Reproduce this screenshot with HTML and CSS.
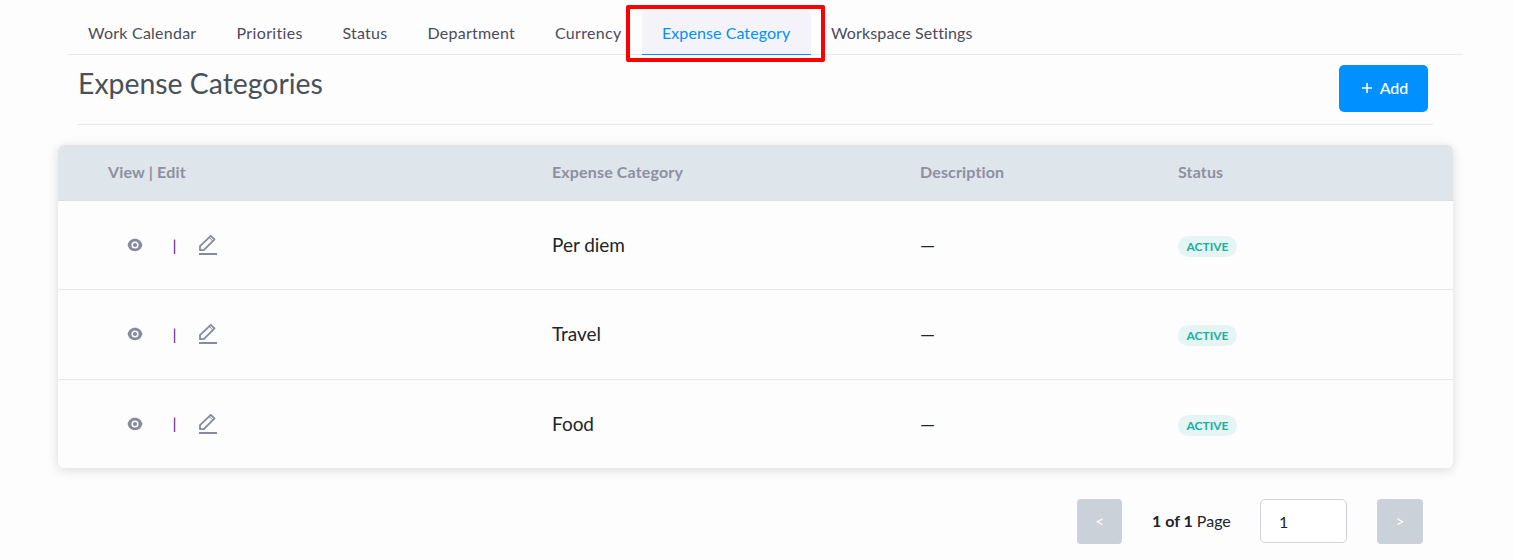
FILE: index.html
```html
<!DOCTYPE html>
<html lang="en">
<head>
<meta charset="utf-8">
<title>Expense Categories</title>
<link rel="stylesheet" href="styles.css">
</head>
<body>
<svg class="sprite" aria-hidden="true">
  <symbol id="eye" viewBox="0 0 16 14"><path fill-rule="evenodd" d="M8 .8C4.200.8 1.500 3.200.6 7c.9 3.800 3.600 6.200 7.400 6.200s6.500-2.400 7.400-6.200C14.500 3.200 11.800.8 8 .8Zm0 2.600a3.600 3.600 0 1 1 0 7.200 3.600 3.600 0 0 1 0-7.200Zm0 1.500a2.100 2.100 0 1 0 0 4.200 2.100 2.100 0 0 0 0-4.200Z"/></symbol>
  <symbol id="edit" viewBox="0 0 18 20"><path fill="none" stroke="currentColor" stroke-width="1.800" stroke-linejoin="round" d="M1 15.200v-4L11.800.9l3.700 3.500L4.800 15.200Z"/><path fill="none" stroke="currentColor" stroke-width="1" d="M10.600 2.900l2.900 2.900"/><path d="M0 18h18v2H0z"/></symbol>
</svg>
<nav class="tabs">
  <a class="tab calendar">Work Calendar</a>
  <a class="tab priorities">Priorities</a>
  <a class="tab status">Status</a>
  <a class="tab department">Department</a>
  <a class="tab currency">Currency</a>
  <a class="tab active">Expense Category<span class="highlight"></span></a>
  <a class="tab workspace">Workspace Settings</a>
</nav>
<header class="heading">
  <h1>Expense Categories</h1>
  <button class="add"><svg class="plus" viewBox="0 0 10 10"><path d="M5 0v10M0 5h10"/></svg>Add</button>
</header>
<main class="table">
  <div class="row head"><span>View | Edit</span><span>Expense Category</span><span>Description</span><span>Status</span></div>
  <div class="row"><span class="actions"><svg class="eye"><use href="#eye"/></svg><i class="sep">|</i><svg class="edit"><use href="#edit"/></svg></span><span class="name">Per diem</span><span class="dash">—</span><span><b class="badge">ACTIVE</b></span></div>
  <div class="row"><span class="actions"><svg class="eye"><use href="#eye"/></svg><i class="sep">|</i><svg class="edit"><use href="#edit"/></svg></span><span class="name">Travel</span><span class="dash">—</span><span><b class="badge">ACTIVE</b></span></div>
  <div class="row"><span class="actions"><svg class="eye"><use href="#eye"/></svg><i class="sep">|</i><svg class="edit"><use href="#edit"/></svg></span><span class="name">Food</span><span class="dash">—</span><span><b class="badge">ACTIVE</b></span></div>
</main>
<footer class="pager">
  <button class="step">&lt;</button>
  <span class="count"><b>1 of 1</b> Page</span>
  <input class="page" value="1">
  <button class="step next">&gt;</button>
</footer>
</body>
</html>
```
FILE: styles.css
```css
* { box-sizing: border-box; }
body { margin: 0; padding-top: 11px; height: 560px; overflow: hidden; background: #fdfdfd; color: #212529; font-family: Lato, "Liberation Sans", sans-serif; font-size: 16px; }
.sprite { display: none; }
.tabs { display: flex; width: 1395px; height: 44px; margin-left: 68px; border-bottom: 1px solid #e8e8eb; }
.tab { position: relative; flex: none; height: 44px; padding: 0 20px; line-height: 43px; color: #4b4b5a; white-space: nowrap; letter-spacing: .24px; }
.calendar { width: 148.500px; }
.priorities { width: 106px; letter-spacing: .36px; }
.status { width: 85px; }
.department { width: 127.500px; }
.currency { width: 107px; letter-spacing: .3px; }
.workspace { letter-spacing: .14px; }
.active { width: 169px; letter-spacing: .08px; color: #0090ff; background: #f4f3f9; border-bottom: 1px solid #0090ff; border-radius: 5px 5px 0 0; }
.highlight { position: absolute; left: -16px; top: -6px; width: 199px; height: 57px; border: 4px solid #f00; border-radius: 2px; }
.heading { display: flex; justify-content: space-between; width: 1355px; height: 70px; margin-left: 78px; padding: 10px 5px 0 0; border-bottom: 1px solid #e8e8e8; }
h1 { margin: 0; font-size: 28.400px; font-weight: 400; line-height: 37px; color: #495057; }
.add { display: flex; align-items: center; justify-content: center; gap: 8px; width: 89px; height: 47px; padding: 0 0 2px 3px; border: 0; border-radius: 5px; background: #0090ff; color: #fff; font: 500 16px Lato, sans-serif; }
.plus { width: 10px; height: 10px; stroke: #fff; stroke-width: 1.500; }
.table { width: 1395px; height: 323px; margin: 20px 0 0 58px; border-radius: 6px; background: #fdfdfd; box-shadow: 0 2px 12px rgba(0,0,0,.14); overflow: hidden; }
.row { display: grid; grid-template-columns: 444px 368px 258px 1fr; align-items: center; height: 89px; padding-left: 50px; border-bottom: 1px solid #e8e8e8; font-size: 19px; }
.row:nth-child(3) { height: 90px; padding-bottom: 1px; }
.row:last-child { border: 0; padding-bottom: 2px; }
.row.head { height: 56px; padding-bottom: 2px; background: #dee5eb; border-color: #d9dde1; color: #8e90a0; font-size: 16px; font-weight: 700; letter-spacing: .15px; }
.name { padding-bottom: 1px; letter-spacing: -.03px; }
.actions { display: flex; align-items: center; padding-left: 19px; color: #878a9d; fill: currentColor; }
.eye { width: 16px; height: 14px; }
.sep { width: 5px; margin: 0 0 2px 29.400px; font: 16px Lato, sans-serif; color: #551a8b; }
.edit { width: 18px; height: 20px; margin-left: 21.600px; }
.dash { padding-bottom: 1px; }
.badge { display: block; width: 59px; height: 21px; margin-top: 3px; border-radius: 11px; background: #e4f5f3; color: #18b19f; font-size: 12px; line-height: 21px; text-align: center; }
.pager { display: flex; align-items: center; width: 1423px; margin-top: 31px; padding-left: 1077px; }
.step { flex: none; width: 45px; height: 45px; padding: 0 0 2px; border: 0; border-radius: 4px; background: #cad1d8; color: #fff; font: 15px Lato, sans-serif; }
.next { width: 46px; margin-left: 30px; }
.count { flex: none; width: 138px; padding: 0 0 2px 30px; white-space: nowrap; }
.page { width: 87px; height: 44px; margin: 0 0 1px; padding: 1px 18px 0; border: 1px solid #ced4da; border-radius: 5px; background: #fff; color: #212529; font: 16px Lato, sans-serif; }
```
